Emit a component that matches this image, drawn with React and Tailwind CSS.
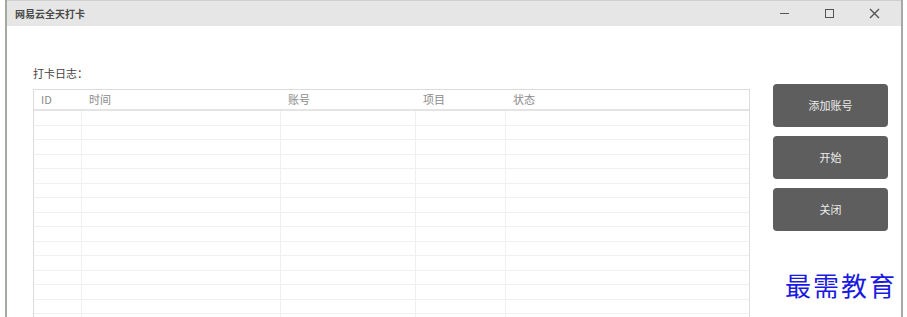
import React from "react";

const columns = [
  { key: "id", label: "ID", width: "w-[48px]" },
  { key: "time", label: "时间", width: "w-[199px]" },
  { key: "account", label: "账号", width: "w-[135px]" },
  { key: "project", label: "项目", width: "w-[90px]" },
  { key: "status", label: "状态", width: "flex-1" },
];

// enough rows so the grid runs past the bottom of the window
const rows = Array.from({ length: 18 }, (_, i) => i);

function App() {
  return (
    <div
      className="relative w-[907px] h-[317px] bg-white flex overflow-hidden"
      style={{ fontFamily: '"Noto Sans CJK SC", "Noto Sans", sans-serif' }}
    >
      <div className="w-[5px]" />
      <div className="w-[2px] bg-[#a3aaa3]" />

      <div className="flex-1 flex flex-col">
        {/* title bar */}
        <div className="h-[26px] shrink-0 bg-[#e6e6e6] border-t border-[#cfcfcf] flex items-center">
          <span className="pl-[8px] text-[10px] font-bold text-[#4a4a4a]">网易云全天打卡</span>
          <div className="ml-auto flex items-center">
            <div className="w-[45px] flex justify-center">
              <div className="w-[9px] h-[1.5px] bg-[#555]" />
            </div>
            <div className="w-[45px] flex justify-center">
              <div className="w-[9px] h-[9px] border-[1.5px] border-[#555]" />
            </div>
            <div className="w-[45px] flex justify-center">
              <svg width="11" height="11" viewBox="0 0 11 11">
                <path d="M1 1 L10 10 M10 1 L1 10" stroke="#555" strokeWidth="1.4" />
              </svg>
            </div>
            <div className="w-[4px]" />
          </div>
        </div>

        {/* body */}
        <div className="flex-1 min-h-0 flex items-start pl-[26px]">
          <div className="w-[717px] pt-[39px]">
            <div className="h-[16px] text-[11px] leading-[16px] text-[#444]">打卡日志：</div>
            <div className="mt-[8px] border border-[#dcdcdc] bg-white">
              <div className="h-[21px] flex items-center border-b-2 border-[#e4e4e4]">
                {columns.map((c) => (
                  <div key={c.key} className={`${c.width} pl-[7px] text-[11px] text-[#8a8a8a]`}>
                    {c.label}
                  </div>
                ))}
              </div>
              {rows.map((r) => (
                <div key={r} className="h-[14.5px] flex border-b border-[#f0f0f0]">
                  {columns.map((c, i) => (
                    <div
                      key={c.key}
                      className={`${c.width} ${i < columns.length - 1 ? "border-r border-[#efefef]" : ""}`}
                    />
                  ))}
                </div>
              ))}
            </div>
          </div>

          <div className="ml-[23px] pt-[58px] flex flex-col gap-[9px]">
            {["添加账号", "开始", "关闭"].map((t) => (
              <button
                key={t}
                className="w-[115px] h-[43px] rounded-[4px] bg-[#5e5e5e] text-[#ececec] text-[11px] flex items-center justify-center"
              >
                {t}
              </button>
            ))}
          </div>
        </div>
      </div>

      <div className="w-[2px] bg-[#a8a8a8]" />
      <div className="w-[4px]" />

      <div
        className="absolute left-[785px] top-[268px] text-[26px] leading-[34px] text-[#1a1ae0] tracking-[2px]"
        style={{ fontFamily: '"Noto Sans CJK SC", serif' }}
      >
        最需教育
      </div>
    </div>
  );
}

export default App;
